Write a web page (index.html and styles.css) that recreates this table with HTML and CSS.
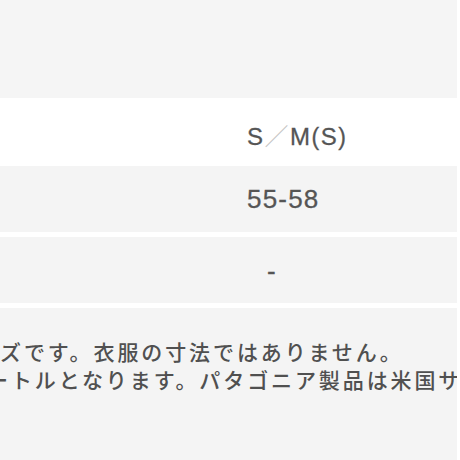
FILE: index.html
```html
<!DOCTYPE html>
<html lang="ja">
<head>
<meta charset="utf-8">
<title>サイズ表</title>
<link rel="stylesheet" href="styles.css">
</head>
<body>
<div class="wrap">
  <div class="top"></div>
  <div class="size-table">
    <div class="row row-head">
      <div class="label"></div>
      <div class="value value-size">S<span class="slash">／</span>M<span class="paren">(</span>S<span class="paren">)</span></div>
    </div>
    <div class="row row-gray">
      <div class="label"></div>
      <div class="value value-num">55-58</div>
    </div>
    <div class="row row-gray">
      <div class="label"></div>
      <div class="value value-num value-dash">-</div>
    </div>
  </div>
  <div class="notes">
    <div class="note-line">ズです。衣服の寸法ではありません。</div>
    <div class="note-line note-line-shift">ートルとなります。パタゴニア製品は米国サ</div>
  </div>
</div>
</body>
</html>
```
FILE: styles.css
```css
html, body {
  margin: 0;
  padding: 0;
  background: #ffffff;
}
body {
  font-family: "Liberation Sans", Arial, "Noto Sans CJK JP", sans-serif;
  color: #555555;
}
.wrap {
  width: 457px;
  height: 460px;
  overflow: hidden;
  display: flex;
  flex-direction: column;
  background: #ffffff;
}
.top {
  height: 98px;
  background: #f5f5f5;
  flex: none;
}
.size-table {
  display: flex;
  flex-direction: column;
  flex: none;
}
.row {
  display: grid;
  grid-template-columns: 247px 1fr;
  align-items: center;
}
.row-head {
  height: 68px;
  background: #ffffff;
  box-sizing: border-box;
  padding-top: 7px;
}
.row-gray {
  height: 66px;
  background: #f4f4f4;
  border-bottom: 5px solid #ffffff;
  box-sizing: content-box;
}
.value {
  white-space: nowrap;
}
.value-size {
  font-size: 24px;
  letter-spacing: 1.5px;
  line-height: 1;
  -webkit-text-stroke: 0.3px #555555;
}
.value-size .slash {
  font-family: "Noto Sans CJK JP", sans-serif;
  font-weight: 300;
  color: #c4c4c4;
  -webkit-text-stroke: 0;
}
.value-size .paren {
  font-size: 23px;
}
.value-num {
  font-size: 26px;
  letter-spacing: 1.2px;
  line-height: 1;
  -webkit-text-stroke: 0.3px #555555;
}
.value-dash {
  padding-left: 20px;
  padding-top: 2px;
}
.notes {
  flex: 1;
  background: #f4f4f4;
  padding-top: 29px;
  overflow: hidden;
}
.note-line {
  font-family: "Noto Sans CJK JP", sans-serif;
  font-size: 21px;
  font-weight: 500;
  letter-spacing: 2.9px;
  line-height: 28px;
  white-space: nowrap;
  color: #505050;
}
.note-line-shift {
  margin-left: -13px;
}
```
